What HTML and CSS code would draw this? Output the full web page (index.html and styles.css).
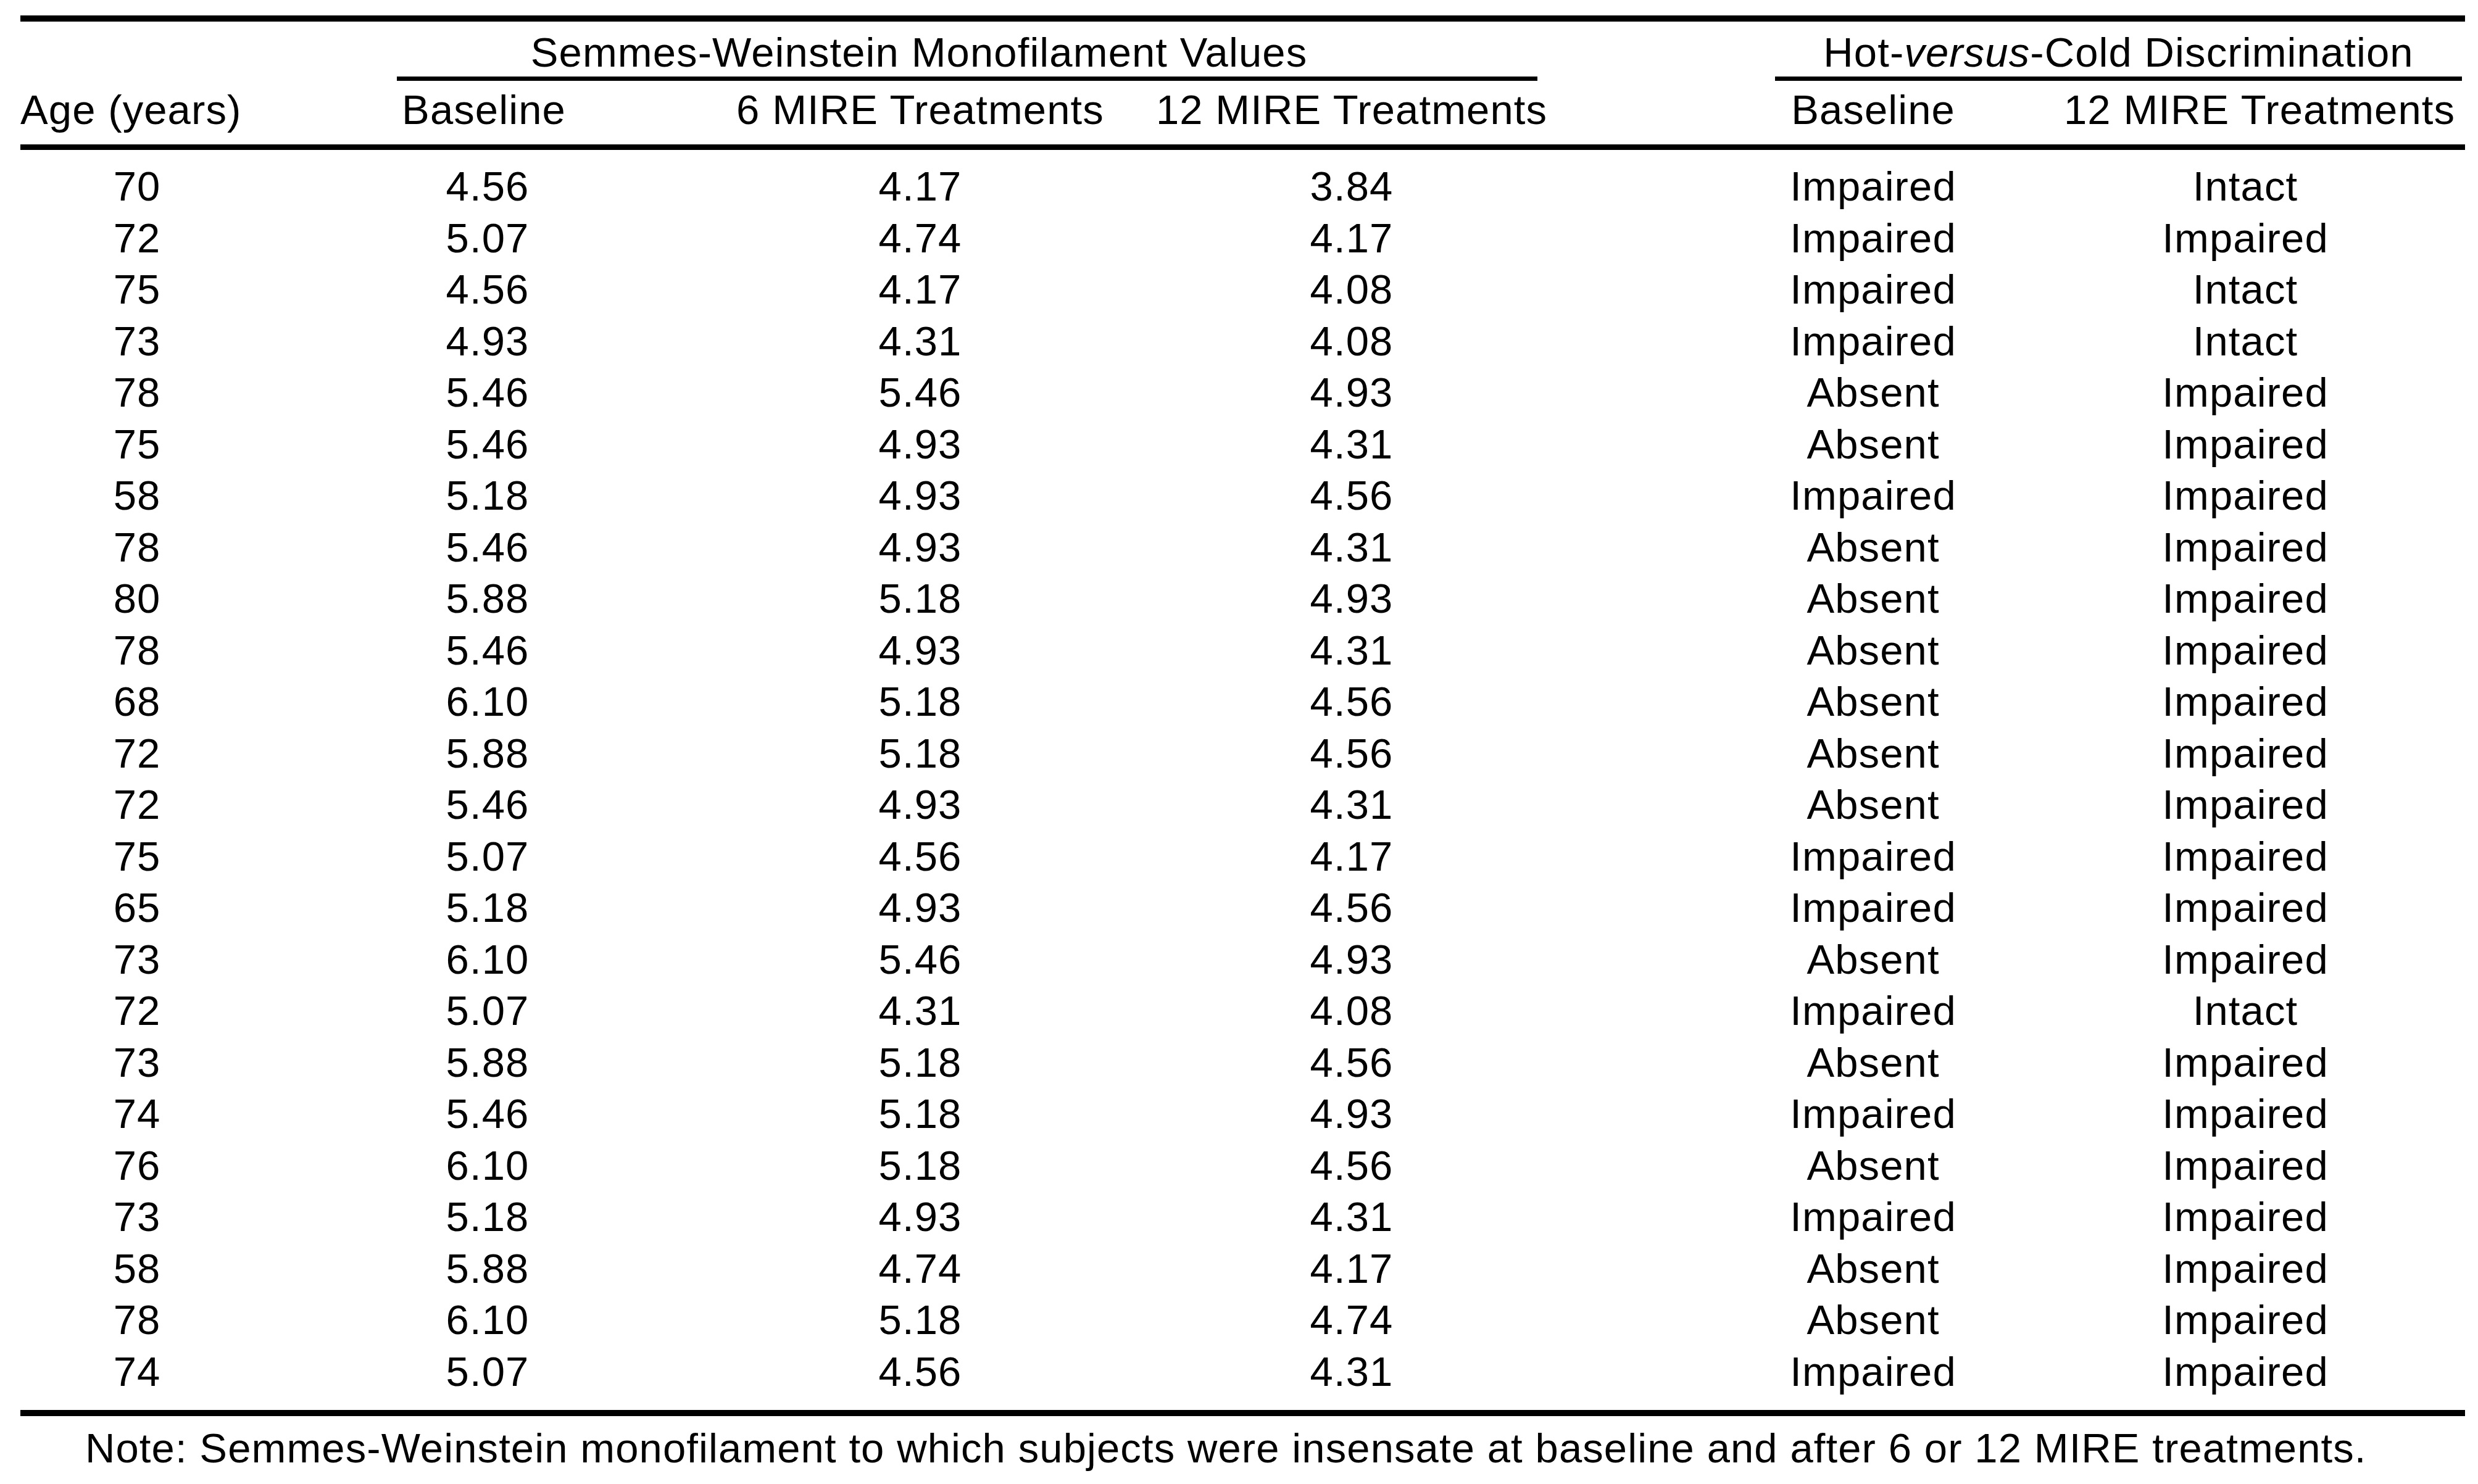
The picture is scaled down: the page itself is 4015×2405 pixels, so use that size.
FILE: index.html
```html
<!DOCTYPE html>
<html>
<head>
<meta charset="utf-8">
<link rel="stylesheet" href="styles.css">
</head>
<body>
<div class="page">
<table class="data">
<colgroup>
<col class="c1"><col class="c2"><col class="c3"><col class="c4"><col class="c5"><col class="c6"><col class="c7">
</colgroup>
<thead>
<tr class="span-row">
<th></th>
<th colspan="3" class="sw"><div class="sw-text">Semmes-Weinstein Monofilament Values</div><div class="sw-rule"></div></th>
<th colspan="3" class="hc"><div class="hc-text">Hot-<i>versus</i>-Cold Discrimination</div></th>
</tr>
<tr class="head-row">
<th class="h-age"><div class="hc-in left">Age (years)</div></th>
<th class="h-base"><div class="hc-in">Baseline</div></th>
<th class="h-six"><div class="hc-in">6 MIRE Treatments</div></th>
<th><div class="hc-in">12 MIRE Treatments</div></th>
<th><div class="hc-in">Baseline</div></th>
<th class="h-last"><div class="hc-in">12 MIRE Treatments</div></th>
<th></th>
</tr>
</thead>
<tbody>
<tr><td>70</td><td>4.56</td><td>4.17</td><td>3.84</td><td>Impaired</td><td>Intact</td><td></td></tr>
<tr><td>72</td><td>5.07</td><td>4.74</td><td>4.17</td><td>Impaired</td><td>Impaired</td><td></td></tr>
<tr><td>75</td><td>4.56</td><td>4.17</td><td>4.08</td><td>Impaired</td><td>Intact</td><td></td></tr>
<tr><td>73</td><td>4.93</td><td>4.31</td><td>4.08</td><td>Impaired</td><td>Intact</td><td></td></tr>
<tr><td>78</td><td>5.46</td><td>5.46</td><td>4.93</td><td>Absent</td><td>Impaired</td><td></td></tr>
<tr><td>75</td><td>5.46</td><td>4.93</td><td>4.31</td><td>Absent</td><td>Impaired</td><td></td></tr>
<tr><td>58</td><td>5.18</td><td>4.93</td><td>4.56</td><td>Impaired</td><td>Impaired</td><td></td></tr>
<tr><td>78</td><td>5.46</td><td>4.93</td><td>4.31</td><td>Absent</td><td>Impaired</td><td></td></tr>
<tr><td>80</td><td>5.88</td><td>5.18</td><td>4.93</td><td>Absent</td><td>Impaired</td><td></td></tr>
<tr><td>78</td><td>5.46</td><td>4.93</td><td>4.31</td><td>Absent</td><td>Impaired</td><td></td></tr>
<tr><td>68</td><td>6.10</td><td>5.18</td><td>4.56</td><td>Absent</td><td>Impaired</td><td></td></tr>
<tr><td>72</td><td>5.88</td><td>5.18</td><td>4.56</td><td>Absent</td><td>Impaired</td><td></td></tr>
<tr><td>72</td><td>5.46</td><td>4.93</td><td>4.31</td><td>Absent</td><td>Impaired</td><td></td></tr>
<tr><td>75</td><td>5.07</td><td>4.56</td><td>4.17</td><td>Impaired</td><td>Impaired</td><td></td></tr>
<tr><td>65</td><td>5.18</td><td>4.93</td><td>4.56</td><td>Impaired</td><td>Impaired</td><td></td></tr>
<tr><td>73</td><td>6.10</td><td>5.46</td><td>4.93</td><td>Absent</td><td>Impaired</td><td></td></tr>
<tr><td>72</td><td>5.07</td><td>4.31</td><td>4.08</td><td>Impaired</td><td>Intact</td><td></td></tr>
<tr><td>73</td><td>5.88</td><td>5.18</td><td>4.56</td><td>Absent</td><td>Impaired</td><td></td></tr>
<tr><td>74</td><td>5.46</td><td>5.18</td><td>4.93</td><td>Impaired</td><td>Impaired</td><td></td></tr>
<tr><td>76</td><td>6.10</td><td>5.18</td><td>4.56</td><td>Absent</td><td>Impaired</td><td></td></tr>
<tr><td>73</td><td>5.18</td><td>4.93</td><td>4.31</td><td>Impaired</td><td>Impaired</td><td></td></tr>
<tr><td>58</td><td>5.88</td><td>4.74</td><td>4.17</td><td>Absent</td><td>Impaired</td><td></td></tr>
<tr><td>78</td><td>6.10</td><td>5.18</td><td>4.74</td><td>Absent</td><td>Impaired</td><td></td></tr>
<tr><td>74</td><td>5.07</td><td>4.56</td><td>4.31</td><td>Impaired</td><td>Impaired</td><td></td></tr>
</tbody>
</table>
<p class="note">Note: Semmes-Weinstein monofilament to which subjects were insensate at baseline and after 6 or 12 MIRE treatments.</p>
</div>
</body>
</html>
```

FILE: styles.css
```css
html, body {
  margin: 0;
  padding: 0;
  background: #ffffff;
}
body {
  font-family: "Liberation Sans", Arial, Helvetica, sans-serif;
  font-size: 67px;
  letter-spacing: 1.1px;
  color: #000000;
}
.page {
  padding-top: 25px;
  padding-left: 33px;
}
.data {
  width: 3961px;
  table-layout: fixed;
  border-collapse: separate;
  border-spacing: 0;
  border-top: 10px solid #000;
}
.c1 { width: 378px; }
.c2 { width: 758px; }
.c3 { width: 644px; }
.c4 { width: 754px; }
.c5 { width: 936px; }
.c6 { width: 270px; }
.c7 { width: 221px; }
th, td {
  padding: 0;
  vertical-align: top;
  font-weight: normal;
  white-space: nowrap;
}
.span-row th {
  padding-top: 12px;
  line-height: 76px;
}
.sw-text {
  text-align: center;
}
.sw-rule {
  margin: 1px 76px 0 232px;
  border-bottom: 7px solid #000;
}
.hc-text {
  margin: 0 5px 0 309px;
  text-align: center;
  padding-bottom: 1px;
  border-bottom: 7px solid #000;
}
.hc-text i {
  font-style: italic;
}
.head-row th {
  padding-top: 9px;
  padding-bottom: 18px;
  line-height: 76px;
  border-bottom: 9px solid #000;
}
.hc-in {
  display: flex;
  justify-content: center;
}
.hc-in.left {
  justify-content: flex-start;
}
.h-base .hc-in { padding-right: 12px; }
.h-last .hc-in { padding-left: 46px; }
tbody td {
  text-align: center;
  line-height: 83.5px;
}
tbody tr:first-child td {
  padding-top: 17px;
}
tbody tr:last-child td {
  padding-bottom: 21px;
  border-bottom: 10px solid #000;
}
.note {
  margin: 14px 0 0 0;
  padding-left: 105px;
  line-height: 76px;
}
```
